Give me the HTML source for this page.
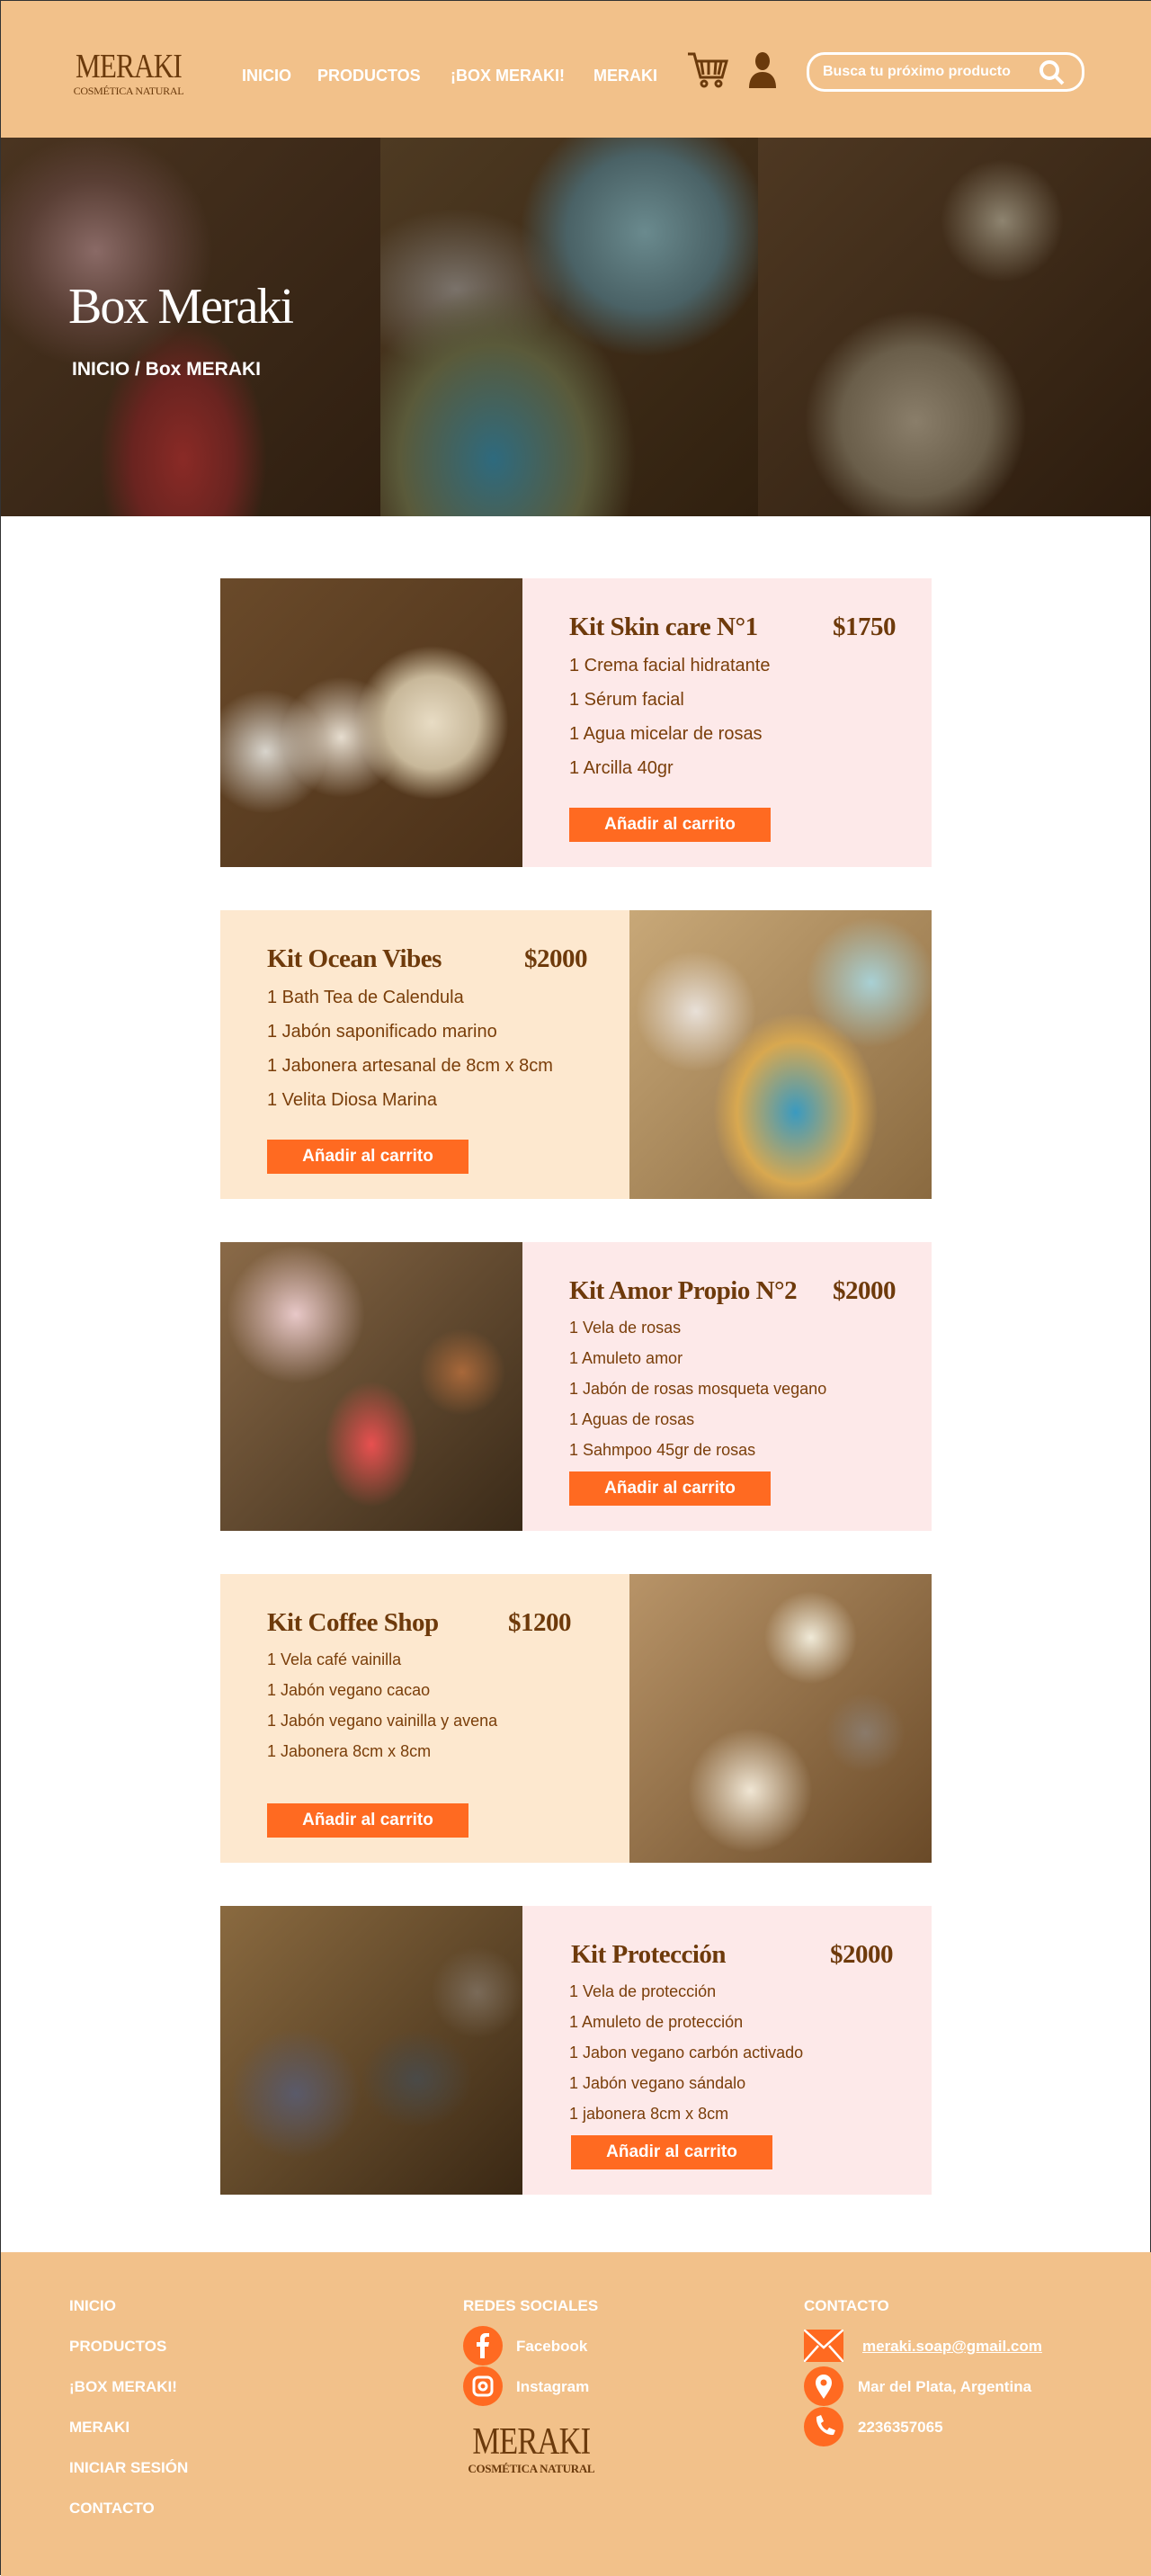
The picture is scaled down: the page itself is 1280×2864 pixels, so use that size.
<!DOCTYPE html>
<html><head><meta charset="utf-8"><style>
*{margin:0;padding:0;box-sizing:border-box}
body{width:1280px;height:2863px;background:#fff;font-family:"Liberation Sans",sans-serif;position:relative;overflow:hidden;border:1px solid #333}
.abs{position:absolute}
header{position:absolute;left:0;top:0;width:1280px;height:152px;background:#f2c18a}
.logo{position:absolute;font-family:"Liberation Serif",serif;color:#6b3a0c;text-align:center;line-height:1}
.logo b{display:block;font-weight:normal;font-size:38px;letter-spacing:-1px;transform:scaleX(.82)}
.logo i{display:block;font-style:normal;font-size:12px;letter-spacing:-.3px;margin-top:2px}
.nav{position:absolute;top:73px;color:#fff;font-weight:bold;font-size:18px}
.search{position:absolute;left:896px;top:57px;width:309px;height:44px;border:3px solid #fff;border-radius:20px;color:#fff;font-weight:bold;font-size:16px;padding:10px 0 0 15px}
.hero{position:absolute;left:0;top:152px;width:1280px;height:421px;background:#3a2514;overflow:hidden}
.hero div{position:absolute;top:0;height:421px}
.card{position:absolute;left:244px;width:791px;height:321px}
.img{position:absolute;top:0;width:336px;height:321px}
.txt{position:absolute;top:0;width:455px;height:321px}
.title{position:absolute;font-family:"Liberation Serif",serif;font-weight:bold;color:#6e3a0b;font-size:29px;letter-spacing:-.5px}
.items{position:absolute;color:#7a3e0a;font-size:20px}
.btn{position:absolute;width:224px;height:38px;background:#ff6a21;color:#fff;font-weight:bold;font-size:19px;text-align:center;line-height:38px}
footer{position:absolute;left:0;top:2503px;width:1280px;height:360px;background:#f2c18a;color:#fff;font-weight:bold}
footer .l{position:absolute;font-size:17px}
.ic{position:absolute;width:44px;height:44px;border-radius:50%;background:#ff6a21}
</style></head><body>
<header>
<div class="logo" style="left:70px;top:54px"><b>MERAKI</b><i>COSMÉTICA NATURAL</i></div>
<div class="nav" style="left:268px">INICIO</div>
<div class="nav" style="left:352px">PRODUCTOS</div>
<div class="nav" style="left:500px">¡BOX MERAKI!</div>
<div class="nav" style="left:659px">MERAKI</div>
<svg class="abs" style="left:762px;top:56px" width="48" height="42" viewBox="0 0 48 42" fill="none" stroke="#6b3a0c" stroke-width="3"><path d="M2 3h7l7 26h24l5-18H12M17 12l2 14M25 12v14M33 12l-1 14M39 12l-3 14"/><circle cx="20" cy="36" r="3"/><circle cx="36" cy="36" r="3"/></svg>
<svg class="abs" style="left:830px;top:57px" width="34" height="40" viewBox="0 0 34 40" fill="#6b3a0c"><ellipse cx="17" cy="10" rx="8" ry="10"/><path d="M2 40c0-12 6-18 15-18s15 6 15 18z"/></svg>
<div class="search">Busca tu próximo producto
<svg class="abs" style="left:255px;top:5px" width="30" height="30" viewBox="0 0 30 30" fill="none" stroke="#fff" stroke-width="4"><circle cx="12" cy="12" r="9"/><path d="M19 19l8 8"/></svg></div>
</header>
<div class="hero">
<div style="left:0;width:422px;background:radial-gradient(circle at 25% 30%,#8a6a66 0,#5a3f35 18%,transparent 30%),radial-gradient(ellipse at 48% 85%,#8a2a26 0,#6a2420 18%,transparent 30%),linear-gradient(135deg,#4a3420,#2e1e10)"></div>
<div style="left:422px;width:420px;background:radial-gradient(circle at 70% 25%,#6a8a8e 0,#4a6266 20%,transparent 32%),radial-gradient(ellipse at 30% 85%,#2e6a7e 0,#5a5a3a 25%,transparent 38%),radial-gradient(ellipse at 20% 40%,#7a726a 0,transparent 25%),linear-gradient(135deg,#4e3a22,#30200f)"></div>
<div style="left:842px;width:438px;background:radial-gradient(circle at 40% 75%,#8a7e6a 0,#6a5e4a 20%,transparent 30%),radial-gradient(circle at 62% 22%,#8e8470 0,transparent 16%),linear-gradient(135deg,#4e3822,#2c1c0e)"></div>
<div style="left:75px;top:156px;height:auto;font-family:'Liberation Serif',serif;color:#fff;font-size:56px;letter-spacing:-2px">Box Meraki</div>
<div style="left:79px;top:246px;height:auto;color:#fff;font-weight:bold;font-size:21px">INICIO / Box MERAKI</div>
</div>

<div class="card" style="top:642px">
<div class="img" style="left:0;background:radial-gradient(circle at 70% 50%,#e8dcc4 0,#c8b89a 18%,transparent 30%),radial-gradient(circle at 40% 55%,#e6ddcf 0,transparent 25%),radial-gradient(circle at 15% 60%,#d8d4cc 0,transparent 20%),linear-gradient(135deg,#6a4a2a,#4a3018)"></div>
<div class="txt" style="left:336px;background:#fde9e9">
<div class="title" style="left:52px;top:38px">Kit Skin care N°1</div>
<div class="title" style="left:345px;top:38px">$1750</div>
<div class="items" style="left:52px;top:78px;line-height:38px">1 Crema facial hidratante<br>1 Sérum facial<br>1 Agua micelar de rosas<br>1 Arcilla 40gr</div>
<div class="btn" style="left:52px;top:255px">Añadir al carrito</div>
</div></div>

<div class="card" style="top:1011px">
<div class="txt" style="left:0;width:455px;background:#fde8cf">
<div class="title" style="left:52px;top:38px">Kit Ocean Vibes</div>
<div class="title" style="left:338px;top:38px">$2000</div>
<div class="items" style="left:52px;top:78px;line-height:38px">1 Bath Tea de Calendula<br>1 Jabón saponificado marino<br>1 Jabonera artesanal de 8cm x 8cm<br>1 Velita Diosa Marina</div>
<div class="btn" style="left:52px;top:255px">Añadir al carrito</div>
</div>
<div class="img" style="left:455px;background:radial-gradient(ellipse at 55% 70%,#3a9ac0 0,#d8a850 25%,transparent 35%),radial-gradient(circle at 80% 25%,#a8d0d4 0,transparent 20%),radial-gradient(circle at 22% 35%,#e8e0d8 0,transparent 20%),linear-gradient(135deg,#c8a878,#8a6a40)"></div>
</div>

<div class="card" style="top:1380px">
<div class="img" style="left:0;background:radial-gradient(circle at 25% 25%,#e8c8c8 0,transparent 22%),radial-gradient(ellipse at 50% 70%,#e85050 0,transparent 22%),radial-gradient(circle at 80% 45%,#a8683a 0,transparent 15%),linear-gradient(135deg,#8a6a48,#3a2a18)"></div>
<div class="txt" style="left:336px;background:#fde9e9">
<div class="title" style="left:52px;top:38px">Kit Amor Propio N°2</div>
<div class="title" style="left:345px;top:38px">$2000</div>
<div class="items" style="left:52px;top:78px;line-height:34px;font-size:18px">1 Vela de rosas<br>1 Amuleto amor<br>1 Jabón de rosas mosqueta vegano<br>1 Aguas de rosas<br>1 Sahmpoo 45gr de rosas</div>
<div class="btn" style="left:52px;top:255px">Añadir al carrito</div>
</div></div>

<div class="card" style="top:1749px">
<div class="txt" style="left:0;width:455px;background:#fde8cf">
<div class="title" style="left:52px;top:38px">Kit Coffee Shop</div>
<div class="title" style="left:320px;top:38px">$1200</div>
<div class="items" style="left:52px;top:78px;line-height:34px;font-size:18px">1 Vela café vainilla<br>1 Jabón vegano cacao<br>1 Jabón vegano vainilla y avena<br>1 Jabonera 8cm x 8cm</div>
<div class="btn" style="left:52px;top:255px">Añadir al carrito</div>
</div>
<div class="img" style="left:455px;background:radial-gradient(circle at 40% 75%,#f0e6d4 0,transparent 22%),radial-gradient(circle at 60% 22%,#f0ead8 0,transparent 16%),radial-gradient(circle at 78% 55%,#8a7a6a 0,transparent 14%),linear-gradient(135deg,#b89468,#6a4a28)"></div>
</div>

<div class="card" style="top:2118px">
<div class="img" style="left:0;background:radial-gradient(circle at 25% 65%,#5a5a6a 0,transparent 22%),radial-gradient(ellipse at 65% 60%,#4a4a48 0,transparent 20%),radial-gradient(circle at 85% 30%,#7a6a58 0,transparent 14%),linear-gradient(135deg,#8a6a40,#3a2814)"></div>
<div class="txt" style="left:336px;background:#fde9e9">
<div class="title" style="left:54px;top:38px">Kit Protección</div>
<div class="title" style="left:342px;top:38px">$2000</div>
<div class="items" style="left:52px;top:78px;line-height:34px;font-size:18px">1 Vela de protección<br>1 Amuleto de protección<br>1 Jabon vegano carbón activado<br>1 Jabón vegano sándalo<br>1 jabonera 8cm x 8cm</div>
<div class="btn" style="left:54px;top:255px">Añadir al carrito</div>
</div></div>

<footer>
<div class="l" style="left:76px;top:50px">INICIO</div>
<div class="l" style="left:76px;top:95px">PRODUCTOS</div>
<div class="l" style="left:76px;top:140px">¡BOX MERAKI!</div>
<div class="l" style="left:76px;top:185px">MERAKI</div>
<div class="l" style="left:76px;top:230px">INICIAR SESIÓN</div>
<div class="l" style="left:76px;top:275px">CONTACTO</div>
<div class="l" style="left:514px;top:50px">REDES SOCIALES</div>
<div class="ic" style="left:514px;top:82px"><svg width="44" height="44" viewBox="0 0 44 44"><path d="M24 36V23h4l1-5h-5v-3c0-2 1-3 3-3h2V8h-4c-4 0-6 3-6 6v4h-4v5h4v13z" fill="#fff"/></svg></div>
<div class="l" style="left:573px;top:95px">Facebook</div>
<div class="ic" style="left:514px;top:127px"><svg width="44" height="44" viewBox="0 0 44 44" fill="none" stroke="#fff" stroke-width="3"><rect x="12" y="12" width="20" height="20" rx="5"/><circle cx="22" cy="22" r="4"/></svg></div>
<div class="l" style="left:573px;top:140px">Instagram</div>
<div class="logo" style="left:510px;top:190px"><b style="font-size:42px">MERAKI</b><i style="font-size:13px">COSMÉTICA NATURAL</i></div>
<div class="l" style="left:893px;top:50px">CONTACTO</div>
<svg class="abs" style="left:893px;top:86px" width="44" height="36" viewBox="0 0 44 36"><rect width="44" height="36" fill="#ff6a21"/><path d="M0 0l22 20L44 0M0 36l16-18M44 36L28 18" stroke="#fff" stroke-width="2.5" fill="none"/></svg>
<div class="l" style="left:958px;top:95px;text-decoration:underline">meraki.soap@gmail.com</div>
<div class="ic" style="left:893px;top:127px"><svg width="44" height="44" viewBox="0 0 44 44"><path d="M22 36c-6-9-9-13-9-18a9 9 0 0118 0c0 5-3 9-9 18z" fill="#fff"/><circle cx="22" cy="18" r="3.5" fill="#ff6a21"/></svg></div>
<div class="l" style="left:953px;top:140px">Mar del Plata, Argentina</div>
<div class="ic" style="left:893px;top:172px"><svg width="44" height="44" viewBox="0 0 44 44"><path d="M14 11l5-2 3 7-3 2c1 4 4 7 7 8l2-3 7 3-2 5c-10 1-20-9-19-20z" fill="#fff"/></svg></div>
<div class="l" style="left:953px;top:185px">2236357065</div>
</footer>
</body></html>
